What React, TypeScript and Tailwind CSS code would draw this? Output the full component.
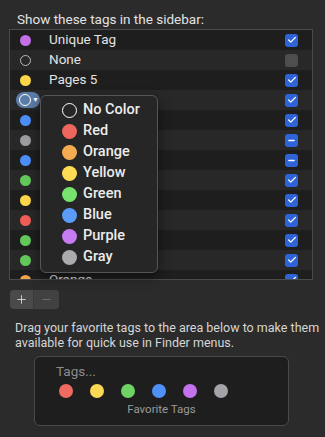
import { Check, Minus, Plus } from "lucide-react";

type Row = { dot: string | null; label: string; state: "on" | "off" | "mixed"; selected?: boolean };

const rows: Row[] = [
  { dot: "#c46ee8", label: "Unique Tag", state: "on" },
  { dot: null, label: "None", state: "off" },
  { dot: "#fbd54a", label: "Pages 5", state: "on" },
  { dot: null, label: "Important", state: "on", selected: true },
  { dot: "#4b8ef6", label: "Blue", state: "on" },
  { dot: "#9c9ca1", label: "Gray", state: "mixed" },
  { dot: "#4b8ef6", label: "Work", state: "mixed" },
  { dot: "#63c85c", label: "Green", state: "on" },
  { dot: "#fbd54a", label: "Yellow", state: "on" },
  { dot: "#ee5e56", label: "Red", state: "on" },
  { dot: "#63c85c", label: "Home", state: "on" },
  { dot: "#63c85c", label: "Done", state: "on" },
  { dot: "#f3a54a", label: "Orange", state: "on" },
];

const menu = [
  { name: "No Color", color: null },
  { name: "Red", color: "#ee675d" },
  { name: "Orange", color: "#f5ab50" },
  { name: "Yellow", color: "#fcdb55" },
  { name: "Green", color: "#78e26e" },
  { name: "Blue", color: "#5a9cf8" },
  { name: "Purple", color: "#c67cf0" },
  { name: "Gray", color: "#aaaaaf" },
];

const favorites = ["#ef6a60", "#fbd954", "#6fd265", "#4f90f7", "#c371ec", "#a3a3a8"];

function CheckBox({ state }: { state: Row["state"] }) {
  if (state === "off") {
    return <span className="size-[13px] rounded-[3px] bg-[#4e4e4e]" />;
  }
  return (
    <span className="flex size-[13px] items-center justify-center rounded-[3px] bg-[#2f64d8]">
      {state === "on" ? (
        <Check className="size-[10px] text-white" strokeWidth={3} />
      ) : (
        <Minus className="size-[9px] text-white" strokeWidth={3.5} />
      )}
    </span>
  );
}

export default function App() {
  return (
    <div
      className="relative h-[437px] w-[325px] overflow-hidden bg-[#2b2b2b] text-[#e2e2e2]"
      style={{ fontFamily: "Roboto, 'Noto Sans', sans-serif" }}
    >
      <p className="pl-[17px] pt-[10px] text-[13.5px] leading-[18px]">Show these tags in the sidebar:</p>

      <div className="ml-[9px] mt-[1px] h-[251px] w-[304px] overflow-hidden border border-[#4b4b4b]">
        {rows.map((row, i) => (
          <div
            key={i}
            className={`flex h-[20px] items-center ${i % 2 === 0 ? "bg-[#1e1e1e]" : "bg-[#282828]"}`}
          >
            <div className="flex w-[30px] justify-center">
              {row.selected ? (
                <span className="ml-[6px] flex h-[16px] w-[26px] items-center rounded-[8px] bg-[#5b7ca6] pl-[3px]">
                  <span className="size-[12px] rounded-full border border-white" />
                  <span className="ml-[1px] text-[7px] leading-none text-white">▼</span>
                </span>
              ) : row.dot ? (
                <span className="size-[11px] rounded-full" style={{ backgroundColor: row.dot }} />
              ) : (
                <span className="size-[11px] rounded-full border border-[#bbbbbb]" />
              )}
            </div>
            <span className="ml-[9px] whitespace-nowrap text-[13.5px] leading-none">{row.label}</span>
            <span className="ml-auto mr-[14px] flex">
              <CheckBox state={row.state} />
            </span>
          </div>
        ))}
      </div>

      <div className="ml-[10px] mt-[10px] flex h-[19px] w-[49px] overflow-hidden rounded-[4px] bg-[#4a4a4a]">
        <span className="flex w-[24px] items-center justify-center border-r border-[#3a3a3a]">
          <Plus className="size-[13px] text-[#e8e8e8]" strokeWidth={1.5} />
        </span>
        <span className="flex flex-1 items-center justify-center bg-[#414141]">
          <Minus className="size-[13px] text-[#777777]" strokeWidth={1.5} />
        </span>
      </div>

      <p className="ml-[15px] mt-[11px] whitespace-nowrap text-[12.5px] leading-[15px] text-[#d6d6d6]">
        Drag your favorite tags to the area below to make them
        <br />
        available for quick use in Finder menus.
      </p>

      <div className="ml-[34px] mt-[6px] h-[70px] w-[255px] rounded-[6px] border border-[#4a4a4a] bg-[#1e1e1e]">
        <p className="pl-[21px] pt-[6px] text-[13.5px] leading-[16px] text-[#8c8c8c]">Tags...</p>
        <div className="mt-[5px] flex gap-[17px] pl-[24px]">
          {favorites.map((c) => (
            <span key={c} className="size-[14px] rounded-full" style={{ backgroundColor: c }} />
          ))}
        </div>
        <p className="mt-[5px] text-center text-[11.5px] leading-[13px] text-[#9a9a9a]">Favorite Tags</p>
      </div>

      <div className="absolute left-[40px] top-[95px] w-[118px] rounded-[6px] border border-[#555555] bg-[#262626] py-[4px] shadow-[0_4px_12px_rgba(0,0,0,0.5)]">
        {menu.map((m) => (
          <div key={m.name} className="flex h-[21px] items-center pl-[21px]">
            {m.color ? (
              <span className="size-[15px] rounded-full" style={{ backgroundColor: m.color }} />
            ) : (
              <span className="size-[15px] rounded-full border-[1.5px] border-white" />
            )}
            <span className="ml-[6px] text-[14.5px] font-medium leading-none text-[#ececec]">{m.name}</span>
          </div>
        ))}
      </div>
    </div>
  );
}
